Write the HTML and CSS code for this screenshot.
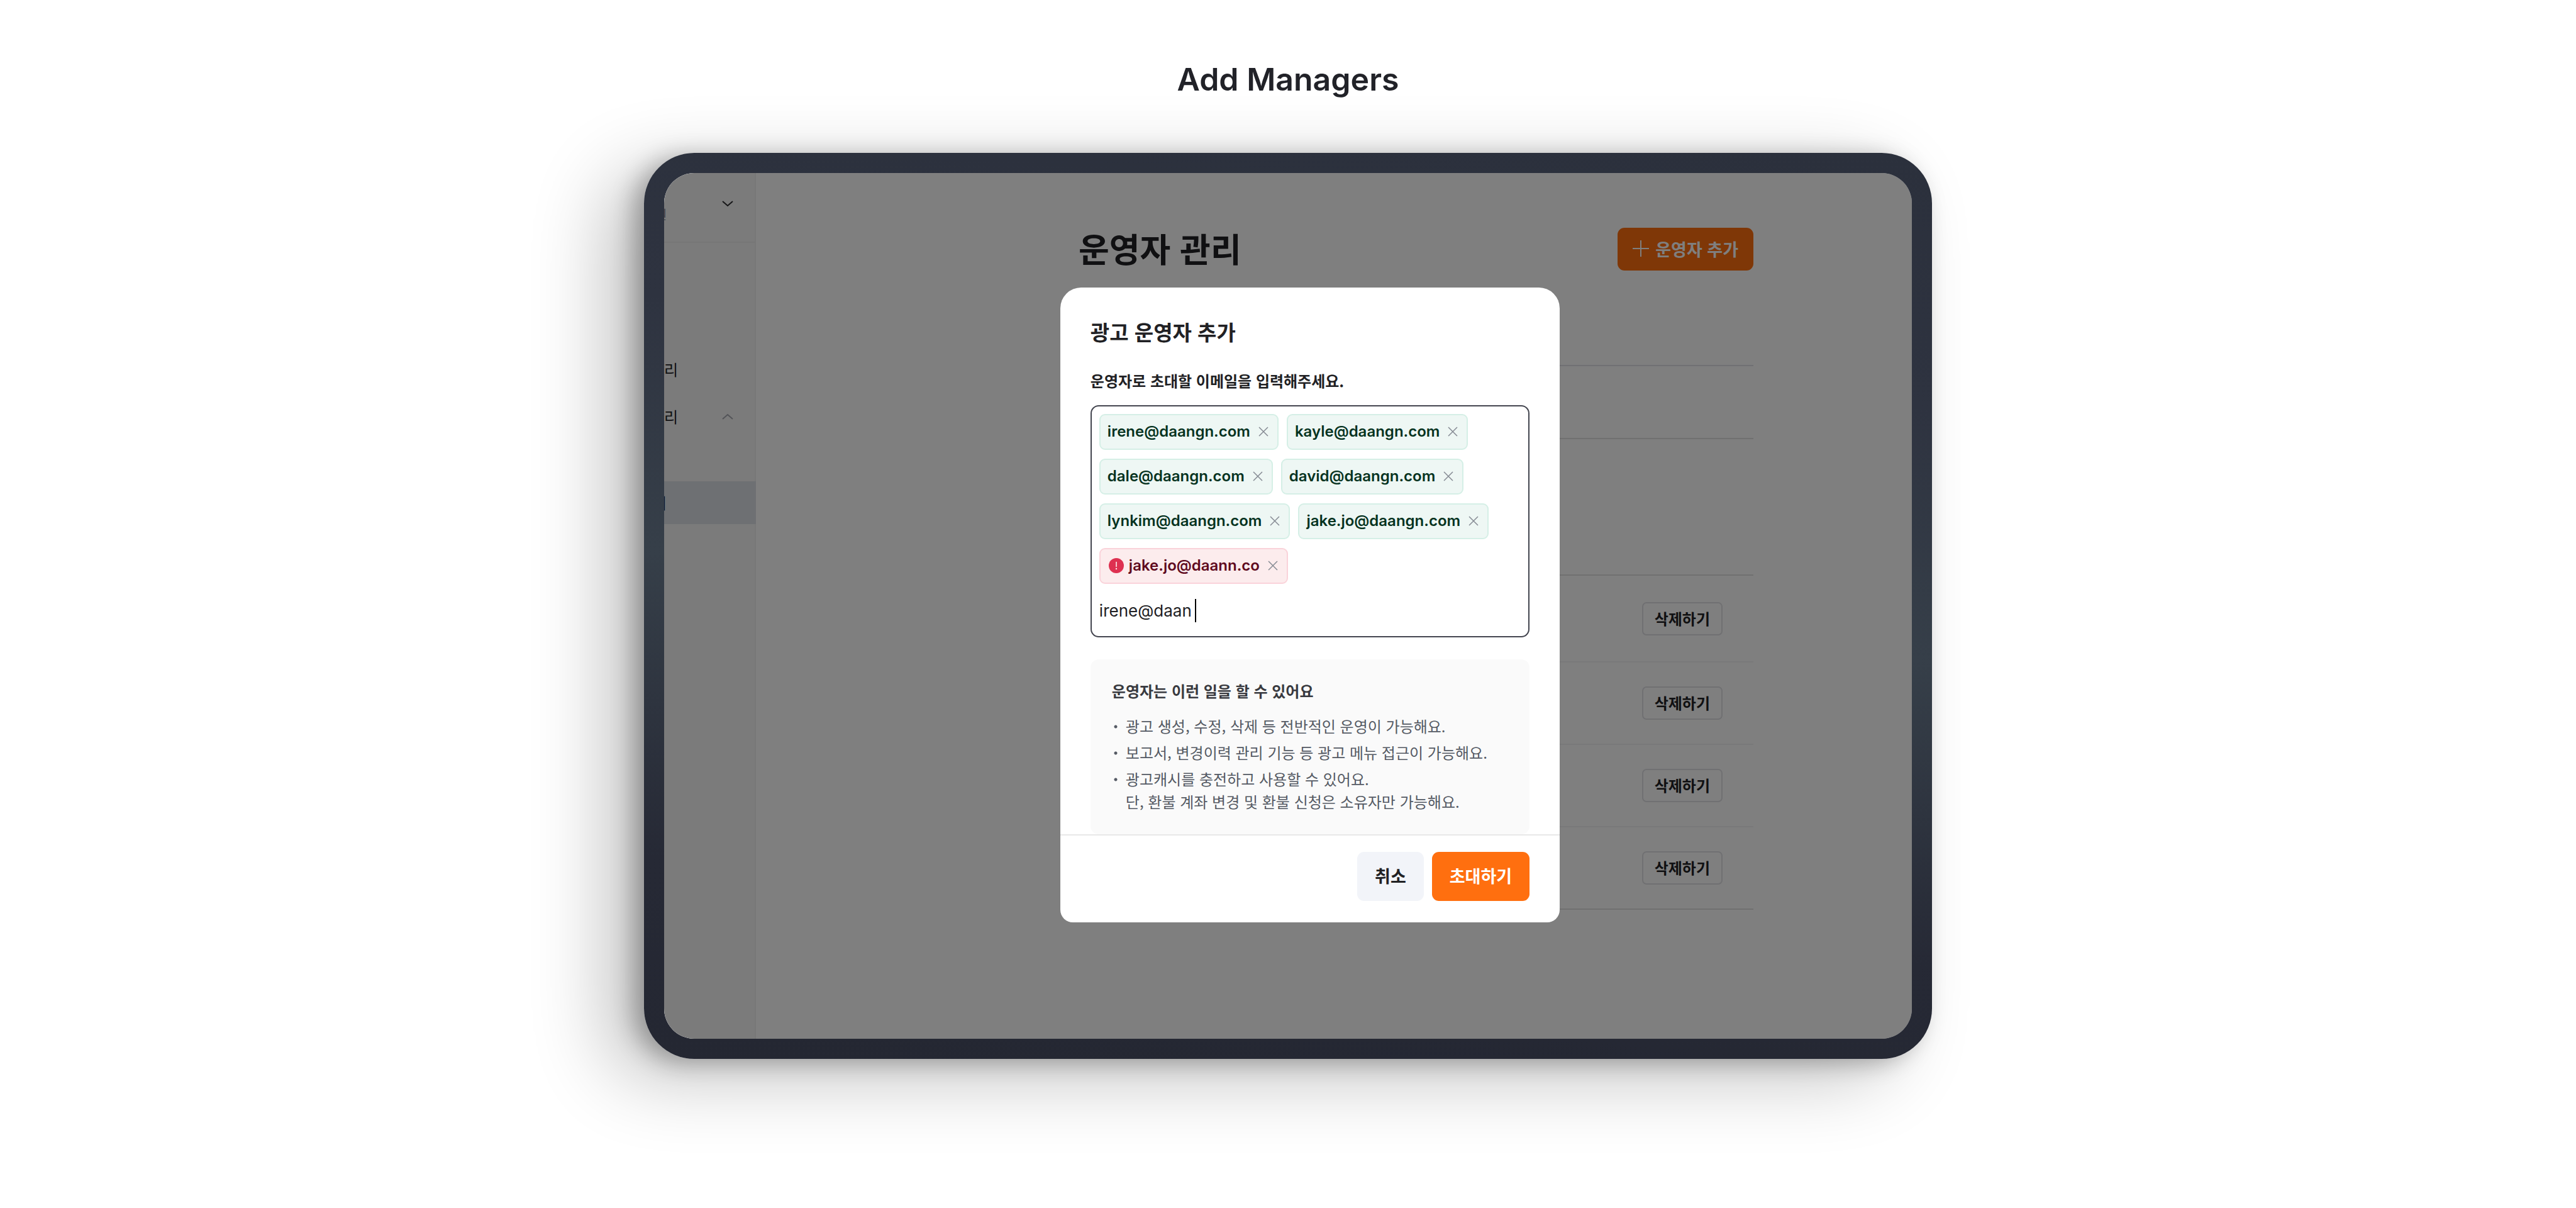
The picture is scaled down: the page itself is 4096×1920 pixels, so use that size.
FILE: index.html
```html
<!DOCTYPE html>
<html lang="ko">
<head>
<meta charset="utf-8">
<title>Add Managers</title>
<link rel="stylesheet" href="styles.css">
</head>
<body>
<h1 class="page-title">Add Managers</h1>
<div class="device">
  <div class="screen">
    <aside class="sidebar">
      <div class="account">
        <span class="account-name">원</span>
        <svg class="chevron" viewBox="0 0 18 12" fill="none" stroke="#2a2b2e" stroke-width="2"><path d="M1 2l8 7 8-7"/></svg>
      </div>
      <nav class="menu">
        <a class="menu-item" href="#ads">리</a>
        <a class="menu-item" href="#manage">리
          <svg class="chevron" viewBox="0 0 18 12" fill="none" stroke="#a6a8b0" stroke-width="2"><path d="M1 10l8-7 8 7"/></svg>
        </a>
        <a class="menu-item current" href="#managers"><span>리</span></a>
      </nav>
    </aside>
    <main class="content">
      <div class="content-head">
        <h2 class="content-title">운영자 관리</h2>
        <button class="add-button" type="button">
          <svg class="plus" viewBox="0 0 26 26" stroke="#fff" stroke-width="2"><path d="M13 0v26M0 13h26"/></svg>
          운영자 추가
        </button>
      </div>
      <table class="managers">
        <tbody>
          <tr class="row-head"><td></td></tr>
          <tr class="row-owner"><td></td></tr>
          <tr class="row-first"><td><button class="delete-button" type="button">삭제하기</button></td></tr>
          <tr><td><button class="delete-button" type="button">삭제하기</button></td></tr>
          <tr><td><button class="delete-button" type="button">삭제하기</button></td></tr>
          <tr class="row-last"><td><button class="delete-button" type="button">삭제하기</button></td></tr>
        </tbody>
      </table>
    </main>
    <div class="overlay">
      <section class="modal" role="dialog" aria-labelledby="dialog-title">
        <div class="modal-body">
          <h2 class="modal-title" id="dialog-title">광고 운영자 추가</h2>
          <label class="field-label" for="email">운영자로 초대할 이메일을 입력해주세요.</label>
          <div class="email-field">
            <span class="chip">irene@daangn.com<button class="remove" type="button" aria-label="삭제"><svg viewBox="0 0 16 16"><path d="M1 1l14 14M15 1L1 15"/></svg></button></span>
            <span class="chip">kayle@daangn.com<button class="remove" type="button" aria-label="삭제"><svg viewBox="0 0 16 16"><path d="M1 1l14 14M15 1L1 15"/></svg></button></span>
            <span class="chip">dale@daangn.com<button class="remove" type="button" aria-label="삭제"><svg viewBox="0 0 16 16"><path d="M1 1l14 14M15 1L1 15"/></svg></button></span>
            <span class="chip">david@daangn.com<button class="remove" type="button" aria-label="삭제"><svg viewBox="0 0 16 16"><path d="M1 1l14 14M15 1L1 15"/></svg></button></span>
            <span class="chip">lynkim@daangn.com<button class="remove" type="button" aria-label="삭제"><svg viewBox="0 0 16 16"><path d="M1 1l14 14M15 1L1 15"/></svg></button></span>
            <span class="chip">jake.jo@daangn.com<button class="remove" type="button" aria-label="삭제"><svg viewBox="0 0 16 16"><path d="M1 1l14 14M15 1L1 15"/></svg></button></span>
            <span class="chip invalid"><svg class="alert" viewBox="0 0 24 24"><circle cx="12" cy="12" r="12" fill="#de3151"/><path d="M12 6.500v7" stroke="#fceced" stroke-width="1.600" stroke-linecap="round"/><circle cx="12" cy="17" r="1.200" fill="#fceced"/></svg>jake.jo@daann.co<button class="remove" type="button" aria-label="삭제"><svg viewBox="0 0 16 16"><path d="M1 1l14 14M15 1L1 15"/></svg></button></span>
            <div class="entry">
              <input class="entry-input" id="email" type="text" value="irene@daan">
              <span class="caret"></span>
            </div>
          </div>
          <div class="guide">
            <h3 class="guide-title">운영자는 이런 일을 할 수 있어요</h3>
            <ul class="guide-list">
              <li>광고 생성, 수정, 삭제 등 전반적인 운영이 가능해요.</li>
              <li>보고서, 변경이력 관리 기능 등 광고 메뉴 접근이 가능해요.</li>
              <li>광고캐시를 충전하고 사용할 수 있어요.<br>단, 환불 계좌 변경 및 환불 신청은 소유자만 가능해요.</li>
            </ul>
          </div>
        </div>
        <div class="modal-foot">
          <button class="cancel" type="button">취소</button>
          <button class="invite" type="button">초대하기</button>
        </div>
      </section>
    </div>
  </div>
</div>
</body>
</html>
```
FILE: styles.css
```css
* { box-sizing: border-box; }

body {
  min-height: 100vh;
  margin: 0;
  background: #fff;
  color: #212124;
  font-family: "Noto Sans CJK KR", sans-serif;
  font-size: 24px;
  line-height: 36px;
}

h1, h2, h3, ul { margin: 0; padding: 0; }
button, input { font-family: inherit; }
svg { display: block; }

.page-title {
  padding: 94px 0 85px;
  text-align: center;
  font-family: Inter, sans-serif;
  font-size: 50px;
  line-height: 64px;
  font-weight: 600;
  color: #212228;
}

/* tablet frame */
.device {
  width: 50%;
  aspect-ratio: 64 / 45;
  margin: 0 auto;
  padding: 32px;
  display: flex;
  border-radius: 80px;
  background: linear-gradient(185deg, #2b303c 0%, #2e3340 25%, #363f49 50%, #262935 80%, #242732 100%);
  box-shadow: -60px 30px 120px rgba(0, 0, 0, .24), -16px 6px 36px rgba(0, 0, 0, .28);
}
.screen {
  position: relative;
  flex: 1;
  display: flex;
  overflow: hidden;
  border-radius: 48px;
  background: #fff;
}

.sidebar {
  flex: none;
  width: 146px;
  background: #f7f7f7;
  border-right: 2px solid #efefef;
}
.account {
  display: flex;
  justify-content: space-between;
  height: 111px;
  padding: 43px 34px 0 0;
  border-bottom: 2px solid #efefef;
}
.account-name {
  margin: 5px 0 0 -14px;
  font-size: 20px;
  color: #868b94;
}
.chevron { width: 18px; height: 12px; }
.menu { padding-top: 167px; }
.menu-item {
  display: flex;
  align-items: center;
  justify-content: space-between;
  height: 68px;
  margin-bottom: 7px;
  padding-right: 34px;
  color: #212124;
  text-decoration: none;
}
.menu-item.current {
  margin: 69px -2px 0 0;
  background: #dde0e6;
}
.menu-item.current span { margin-left: -18px; }

.content {
  flex: 1;
  padding: 87px 252px 0 513px;
}
.content-head {
  display: flex;
  align-items: center;
  justify-content: space-between;
}
.content-title {
  padding-bottom: 4px;
  font-size: 53px;
  line-height: 64px;
  font-weight: 700;
}
.add-button {
  display: flex;
  align-items: center;
  gap: 10px;
  height: 68px;
  padding: 0 24px 2px;
  border: 0;
  border-radius: 11px;
  background: #ff6f0f;
  color: #fff;
  font-size: 27px;
  font-weight: 700;
}
.plus { width: 26px; height: 26px; }

.managers {
  width: 100%;
  margin-top: 150px;
  border-collapse: collapse;
}
.managers td {
  height: 131px;
  padding: 0 49px 0 0;
  text-align: right;
  border-top: 2px solid #f2f3f4;
}
.managers .row-head td { height: 116px; border-top-color: #e0e0e6; }
.managers .row-owner td { height: 217px; border-top-color: #e0e0e0; }
.managers .row-first td { height: 138px; border-top-color: #e0e0e0; }
.managers .row-last td { border-bottom: 2px solid #e0e0e0; }
.delete-button {
  height: 53px;
  padding: 0 18px 2px;
  border: 2px solid #e0e0e4;
  border-radius: 7px;
  background: #fff;
  color: #212124;
  font-size: 24px;
  font-weight: 700;
}

/* dialog */
.overlay {
  position: absolute;
  inset: 0;
  display: flex;
  align-items: center;
  justify-content: center;
  padding: 0 0 4px 70px;
  background: rgba(0, 0, 0, .5);
}
.modal {
  width: 41.5%;
  overflow: hidden;
  border-radius: 33px 33px 20px 20px;
  background: #fff;
}
.modal-body { padding: 46px 48px 0; }
.modal-title {
  font-size: 33px;
  line-height: 48px;
  font-weight: 700;
}
.field-label {
  display: block;
  margin: 36px 0 21px;
  font-weight: 700;
}
.email-field {
  display: flex;
  flex-wrap: wrap;
  gap: 14px 13px;
  padding: 12px;
  border: 2px solid #43454f;
  border-radius: 13px;
  font-family: Inter, "Noto Sans CJK KR", sans-serif;
}
.chip {
  display: flex;
  align-items: center;
  height: 57px;
  padding: 0 14px 0 11px;
  border: 2px solid #d5efe6;
  border-radius: 9px;
  background: #eef7f4;
  color: #06331f;
  font-weight: 600;
}
.remove {
  margin-left: 13px;
  padding: 0;
  border: 0;
  background: none;
}
.remove svg {
  width: 16px;
  height: 16px;
  fill: none;
  stroke: #868b94;
  stroke-width: 1.5;
}
.chip.invalid {
  border-color: #fad3da;
  background: #fceced;
  color: #5f0a1e;
}
.alert { width: 24px; height: 24px; margin: 0 8px 0 2px; }
.entry {
  display: flex;
  align-items: center;
  width: 100%;
  height: 57px;
}
.entry-input {
  width: 152px;
  padding: 0;
  border: 0;
  outline: 0;
  background: none;
  color: #212124;
  font-size: 26px;
}
.caret { width: 2px; height: 37px; background: #000; }

.guide {
  margin-top: 35px;
  padding: 32px 34px 34px;
  border-radius: 13px;
  background: #fafafa;
  color: #555a64;
}
.guide-title {
  font-size: 24px;
  line-height: 36px;
  font-weight: 700;
  color: #393a40;
}
.guide-list {
  display: grid;
  gap: 6px;
  margin-top: 20px;
  list-style: none;
}
.guide-list li {
  padding-left: 22px;
  background: radial-gradient(circle at 6px 19px, #555a64 2px, transparent 3px);
}

.modal-foot {
  display: flex;
  justify-content: flex-end;
  gap: 13px;
  padding: 26px 48px 34px;
  border-top: 2px solid #e8e8e8;
}
.cancel, .invite {
  height: 78px;
  padding: 0 28px 2px;
  border: 0;
  border-radius: 11px;
  font-size: 27px;
  font-weight: 700;
}
.cancel { background: #f2f4f9; color: #212124; }
.invite { background: #ff6f0f; color: #fff; }
```
